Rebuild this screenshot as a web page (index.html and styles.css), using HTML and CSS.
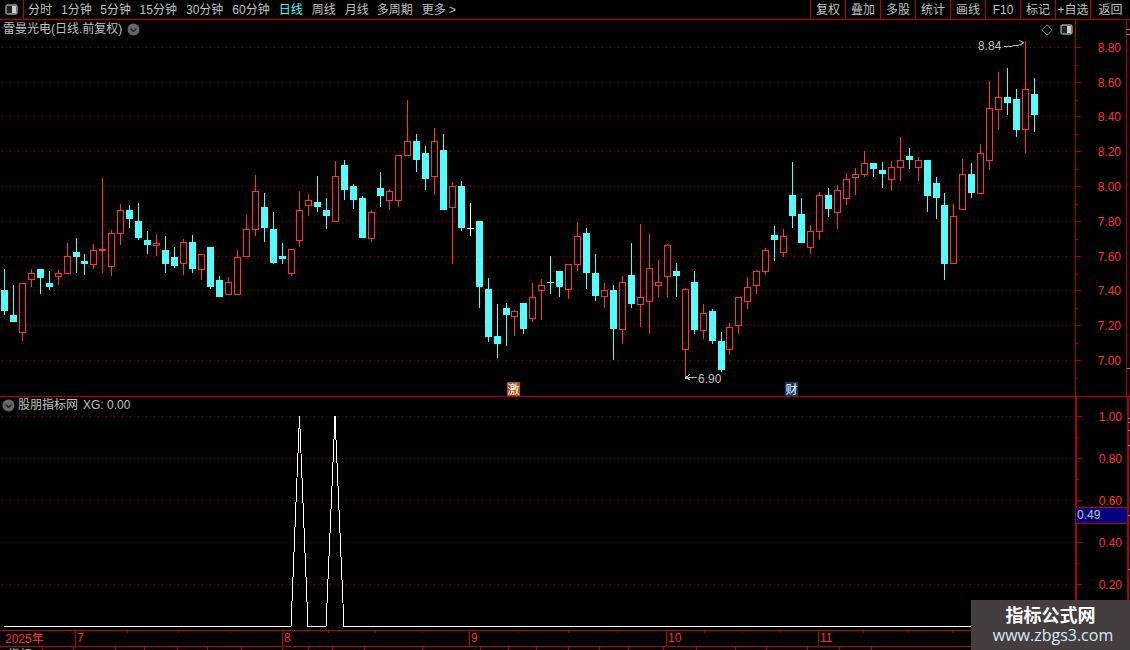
FILE: index.html
```html
<!DOCTYPE html>
<html lang="zh">
<head>
<meta charset="utf-8">
<title>雷曼光电</title>
<link rel="stylesheet" href="styles.css">
</head>
<body>
<div class="app">
  <header class="topbar">
    <div class="toggle-cell">
      <svg class="toggle-icon" width="14" height="12" viewBox="0 0 14 12"><rect x="1" y="1" width="11" height="9" rx="2" fill="#222" stroke="#999" stroke-width="1.4"/><rect x="7" y="2" width="4" height="7" fill="#ccc"/></svg>
    </div>
    <nav class="periods">
      <span>分时</span><span class="tight">1分钟</span><span class="tight">5分钟</span><span>15分钟</span><span>30分钟</span><span>60分钟</span><span class="active">日线</span><span>周线</span><span class="tighter">月线</span><span>多周期</span><span>更多 &gt;</span>
    </nav>
    <nav class="tools">
      <span>复权</span><span>叠加</span><span>多股</span><span>统计</span><span>画线</span><span>F10</span><span>标记</span><span>+自选</span><span>返回</span>
    </nav>
  </header>

  <section class="panel price-panel">
    <div class="plot">
      <div class="plot-title">
        <span>雷曼光电(日线.前复权)</span>
        <svg class="chevron" width="13" height="13" viewBox="0 0 13 13"><circle cx="6.5" cy="6.5" r="6" fill="#666"/><path d="M3.5 5.5 6.5 8.5 9.5 5.5" fill="none" stroke="#222" stroke-width="1.4"/></svg>
      </div>
      <div class="plot-controls">
        <svg width="12" height="12" viewBox="0 0 12 12"><path d="M6 .8 11.2 6 6 11.2 .8 6Z" fill="none" stroke="#888"/></svg>
        <svg width="13" height="12" viewBox="0 0 13 12"><rect x="1" y="1" width="11" height="9" rx="2" fill="#222" stroke="#999" stroke-width="1.4"/><rect x="7" y="2" width="4" height="7" fill="#ccc"/></svg>
      </div>
      <svg id="price-plot" class="canvas" viewBox="0 20 1075 376" width="1075" height="376"></svg>
    </div>
    <div class="axis"><svg id="price-axis" class="canvas" viewBox="1076 20 54 376" width="54" height="376"></svg></div>
  </section>

  <section class="panel xg-panel">
    <div class="plot">
      <div class="plot-title xg-title">
        <svg class="chevron" width="13" height="13" viewBox="0 0 13 13"><circle cx="6.5" cy="6.5" r="6" fill="#666"/><path d="M3.5 5.5 6.5 8.5 9.5 5.5" fill="none" stroke="#222" stroke-width="1.4"/></svg>
        <span>股朋指标网</span><span class="xg-value">XG: 0.00</span>
      </div>
      <svg id="xg-plot" class="canvas" viewBox="0 397 1074 233" width="1074" height="233"></svg>
    </div>
    <div class="axis axis-thick">
      <svg id="xg-axis" class="canvas" viewBox="1076 397 54 233" width="54" height="233"></svg>
      <div class="current-value">0.49</div>
    </div>
  </section>

  <footer class="dates" id="dates">
    <span class="year">2025年</span>
  </footer>
  <div class="tabs" id="tabs"></div>

  <aside class="watermark">
    <strong>指标公式网</strong>
    <span>www.zbgs3.com</span>
  </aside>
</div>
<script src="chart.js"></script>
</body>
</html>
```

FILE: styles.css
```css
* { box-sizing: border-box; }

html, body {
  margin: 0;
  height: 100%;
  background: #000;
  overflow: hidden;
}

.app {
  position: relative;
  width: 1130px;
  height: 650px;
  display: flex;
  flex-direction: column;
  overflow: hidden;
  background: #000;
  color: #c0c0c0;
  font: 12px/14px "Liberation Sans", "Noto Sans CJK SC", sans-serif;
}

.topbar {
  height: 20px;
  flex: none;
  display: flex;
  border-bottom: 1px solid #c00000;
}

.toggle-cell {
  width: 24px;
  display: flex;
  align-items: center;
  justify-content: center;
  border-right: 1px solid #c00000;
}

.periods {
  display: flex;
  align-items: center;
  gap: 9px;
  padding-left: 4px;
  flex: 1;
  white-space: nowrap;
}

.periods .active { color: #54fcfc; }
.periods .tight { margin-right: -.4px; }
.periods .tighter { margin-right: -1px; }

.tools {
  display: grid;
  grid-template-columns: repeat(8, 35px) 40px;
  width: 320px;
}

.tools span {
  display: flex;
  align-items: center;
  justify-content: center;
  border-left: 1px solid #c00000;
  white-space: nowrap;
}

.panel {
  display: flex;
  flex: none;
}

.price-panel {
  height: 377px;
  border-bottom: 1px solid #c00000;
}

.xg-panel { height: 233px; }

.plot {
  position: relative;
  width: 1075px;
  flex: none;
}

.axis {
  position: relative;
  flex: 1;
  border-left: 1px solid #b00000;
}

.axis-thick { border-left-width: 2px; }

.canvas {
  display: block;
  shape-rendering: crispEdges;
}

.canvas text {
  font: 12px "Liberation Sans", "Noto Sans CJK SC", sans-serif;
  shape-rendering: auto;
}

.plot-title {
  position: absolute;
  left: 3px;
  top: 2px;
  display: flex;
  align-items: center;
  gap: 5px;
  white-space: nowrap;
}

.xg-title {
  left: 2px;
  top: 1px;
  gap: 3px;
}

.xg-value { margin-left: 2px; }

.plot-controls {
  position: absolute;
  right: 2px;
  top: 4px;
  display: flex;
  gap: 7px;
}

.current-value {
  position: absolute;
  left: -1px;
  right: 4px;
  top: 110px;
  height: 17px;
  padding-left: 1px;
  line-height: 15px;
  background: #000080;
  border-top: 1px solid #c00000;
  border-bottom: 1px solid #c00000;
}

.dates {
  position: relative;
  height: 17px;
  flex: none;
  border-top: 1px solid #c00000;
  border-bottom: 1px solid #c00000;
  color: #ff3232;
  line-height: 15px;
}

.year {
  position: absolute;
  left: 5px;
  top: 1px;
}

.month {
  position: absolute;
  top: 0;
  height: 100%;
  padding-left: 1px;
  border-left: 1px solid #c00000;
}

.minor {
  position: absolute;
  top: 0;
  width: 1px;
  height: 2px;
  background: #c00000;
}

.tabs {
  position: relative;
  flex: 1;
  overflow: hidden;
}

.tab {
  position: absolute;
  top: 0;
  width: 1px;
  height: 100%;
  background: #c00000;
}

.tab-label {
  position: absolute;
  left: 8px;
  top: 1px;
  white-space: nowrap;
}

.watermark {
  position: absolute;
  right: 0;
  bottom: 0;
  width: 159px;
  height: 50px;
  display: flex;
  flex-direction: column;
  align-items: center;
  background: #443e3e;
  color: #fff;
}

.watermark strong {
  margin-top: 4px;
  font: 700 18px/21px "Noto Sans CJK SC", sans-serif;
}

.watermark span {
  margin-left: 5px;
  font: 16px/20px "Open Sans", sans-serif;
  color: #d6e8ff;
}
```

FILE: chart.js
```js
// x, wick top, wick bottom, body top, body bottom, kind (r red, c cyan, w white)
var candles = [
[4,269,315,290,311,'c'],[13,285,322,315,322,'c'],[22,283,341,283,333,'r'],[31,269,287,273,280,'r'],[40,269,294,269,278,'c'],[49,271,290,283,287,'c'],[58,270,285,273,277,'r'],[67,243,274,256,274,'r'],[76,238,273,252,257,'c'],[84,254,275,261,264,'c'],
[93,244,269,250,265,'r'],[102,178,273,249,251,'r'],[111,230,276,233,267,'r'],[120,204,245,210,234,'r'],[129,205,228,210,219,'c'],[138,203,240,221,238,'c'],[147,231,254,240,245,'c'],[156,234,256,243,246,'r'],[165,236,273,250,264,'c'],[174,247,268,257,266,'c'],
[183,239,275,242,264,'r'],[192,235,273,242,269,'c'],[201,254,280,254,270,'r'],[210,247,289,247,287,'c'],[219,276,297,280,297,'c'],[228,277,295,282,295,'r'],[237,250,295,257,295,'r'],[246,215,257,229,257,'r'],[255,175,236,191,230,'r'],[264,193,242,207,228,'c'],
[273,212,264,229,263,'c'],[282,243,264,256,259,'c'],[291,249,276,249,274,'r'],[299,191,247,210,241,'r'],[308,194,216,200,206,'r'],[317,176,212,202,207,'c'],[326,198,229,210,216,'c'],[335,161,222,176,222,'r'],[344,160,200,165,190,'c'],[353,184,209,186,200,'c'],
[362,196,238,198,238,'c'],[371,210,242,212,239,'r'],[380,172,207,188,196,'c'],[389,189,210,191,201,'r'],[398,155,207,155,201,'r'],[407,100,156,141,156,'r'],[416,134,172,141,160,'c'],[425,146,190,153,179,'c'],[434,128,195,141,177,'r'],[443,134,210,150,210,'c'],
[452,182,264,186,208,'r'],[461,181,231,186,228,'c'],[470,203,236,228,229,'w'],[479,221,308,221,287,'c'],[488,278,342,289,337,'c'],[497,304,358,336,344,'c'],[506,303,346,308,315,'c'],[514,310,336,311,317,'r'],[523,303,334,303,329,'c'],[532,283,322,297,319,'r'],
[541,279,320,285,291,'r'],[550,256,294,282,283,'c'],[559,271,297,271,287,'c'],[568,264,299,264,290,'r'],[577,222,271,236,265,'r'],[586,228,289,233,273,'c'],[595,254,301,273,296,'c'],[604,283,308,290,297,'r'],[613,285,360,290,329,'c'],[622,276,344,282,330,'r'],
[631,243,308,275,304,'c'],[640,224,327,297,305,'r'],[649,234,334,268,302,'r'],[658,260,297,282,286,'r'],[667,244,297,245,277,'r'],[676,263,297,271,276,'c'],[685,288,378,289,350,'r'],[694,271,334,282,330,'c'],[703,304,339,313,331,'r'],[712,309,344,311,341,'c'],
[721,332,372,341,370,'c'],[729,323,355,327,350,'r'],[738,297,334,297,326,'r'],[747,277,309,287,302,'r'],[756,270,294,271,286,'r'],[765,248,275,250,272,'r'],[774,226,261,235,240,'c'],[783,229,257,236,253,'r'],[792,162,228,195,216,'c'],[801,198,243,214,243,'c'],
[810,225,254,231,248,'r'],[819,192,240,195,232,'r'],[828,188,217,195,209,'c'],[837,185,229,190,213,'r'],[846,173,205,179,199,'r'],[855,168,195,174,178,'r'],[864,151,177,163,175,'r'],[873,163,177,163,169,'c'],[882,162,188,170,174,'c'],[891,161,191,167,180,'r'],
[900,137,181,160,168,'r'],[909,148,169,156,160,'c'],[918,157,181,160,168,'r'],[927,160,212,160,196,'c'],[936,177,219,183,198,'c'],[944,193,280,205,264,'c'],[953,204,264,216,264,'r'],[962,159,210,174,210,'r'],[971,163,198,174,193,'c'],[980,144,194,153,194,'r'],
[989,81,170,108,161,'r'],[998,72,130,97,110,'r'],[1007,68,115,97,103,'c'],[1016,89,137,99,130,'c'],[1025,41,153,89,130,'r'],[1034,78,132,94,115,'c']
];

var RED = '#ff3232', CYAN = '#54fcfc', GRID = '#8c0000', LINE = '#b00000', TEXT = '#c0c0c0';

function rect(x, y, w, h, fill) {
  return '<rect x="' + x + '" y="' + y + '" width="' + w + '" height="' + h + '" fill="' + fill + '"/>';
}
function dotted(y, x2) {
  return '<path d="M2 ' + (y + .5) + 'H' + x2 + '" stroke="' + GRID + '" stroke-dasharray="1 3" fill="none"/>';
}
function label(x, y, s, fill, anchor) {
  return '<text x="' + x + '" y="' + y + '" fill="' + fill + '"' + (anchor ? ' text-anchor="' + anchor + '"' : '') + '>' + s + '</text>';
}

function drawCandle(c) {
  var x = c[0], hi = c[1], lo = c[2], top = c[3], bot = c[4], k = c[5];
  var col = k === 'r' ? RED : k === 'c' ? CYAN : '#fff';
  var s = '';
  if (k === 'w' || bot - top < 2 && k === 'c') {
    return rect(x, hi, 1, lo - hi, col) + rect(x - 3, top, 7, 1, col);
  }
  if (top > hi) s += rect(x, hi, 1, top - hi, col);
  if (lo > bot) s += rect(x, bot, 1, lo - bot, col);
  if (k === 'c') return s + rect(x - 3, top, 7, bot - top, col);
  return s + '<rect x="' + (x - 2.5) + '" y="' + (top + .5) + '" width="6" height="' + (bot - top - 1) + '" fill="none" stroke="' + col + '"/>';
}

var priceYs = [47, 82, 116, 151, 186, 221, 256, 290, 325, 360];
var priceLabels = ['8.80', '8.60', '8.40', '8.20', '8.00', '7.80', '7.60', '7.40', '7.20', '7.00'];

var p = '';
priceYs.forEach(function (y) { p += dotted(y, 1075); });
p += candles.map(drawCandle).join('');
// high / low annotations
p += label(978, 50, '8.84', TEXT);
p += '<path d="M1004 46.5H1011L1014 45.5H1018L1024 42.5M1019 40.5 1024 42.5 1020 45" fill="none" stroke="' + TEXT + '" shape-rendering="auto"/>';
p += label(698, 383, '6.90', TEXT);
p += '<path d="M697 377.5H686M690 374.5 686 377.5 690 380" fill="none" stroke="' + TEXT + '"/>';
p += rect(685, 377, 2, 2, TEXT);
p += rect(507, 382, 13, 14, '#b0500f') + label(507.5, 394, '激', '#fff');
p += rect(785, 382, 13, 14, '#0f3a6e') + label(785.5, 394, '财', '#fff');
document.getElementById('price-plot').innerHTML = p;

function axis(ys, labels, step) {
  var a = '';
  ys.forEach(function (y, i) {
    a += rect(1076, y, 5, 1, LINE);
    a += rect(1076, y + Math.round(step / 2), 2, 1, LINE);
    a += label(1121, y + 5, labels[i], RED, 'end');
  });
  a += rect(1126, 0, 1, 650, LINE);
  return a;
}

document.getElementById('price-axis').innerHTML = axis(priceYs, priceLabels, 35)
  + rect(1127, 29, 3, 1, '#888') + rect(1127, 34, 3, 1, '#888') + rect(1127, 368, 3, 1, '#888');

var xgYs = [416, 458, 500, 542, 584];
var xgLabels = ['1.00', '0.80', '0.60', '0.40', '0.20'];
var x = '';
xgYs.forEach(function (y) { x += dotted(y, 1074); });
x += '<path d="M4 626.5H291L299.5 416L308 626.5H326L335 416L344 626.5H1074" fill="none" stroke="#fff"/>';
document.getElementById('xg-plot').innerHTML = x;

document.getElementById('xg-axis').innerHTML = axis(xgYs, xgLabels, 42)
  + rect(1126, 397, 2, 233, LINE)
  + rect(1127, 418, 3, 1, '#888') + rect(1127, 422, 3, 1, '#888') + rect(1127, 430, 3, 1, '#888')
  + rect(1127, 445, 3, 1, '#888') + rect(1127, 515, 3, 1, '#888') + rect(1127, 569, 3, 1, '#888');

var dates = document.getElementById('dates');
[[75, '7'], [282, '8'], [469, '9'], [666, '10'], [818, '11']].forEach(function (m) {
  var el = document.createElement('span');
  el.className = 'month';
  el.style.left = m[0] + 'px';
  el.textContent = m[1];
  dates.appendChild(el);
});
[127, 178, 230, 328, 375, 422, 518, 568, 617, 704, 742, 780, 863, 908, 952].forEach(function (v) {
  var el = document.createElement('i');
  el.className = 'minor';
  el.style.left = v + 'px';
  dates.appendChild(el);
});

var tabs = document.getElementById('tabs');
[42, 73, 115, 144, 177, 207, 241, 282, 308, 332, 364, 422, 480, 508, 536, 568, 599, 628, 663, 696, 735, 766, 807, 839, 871].forEach(function (v) {
  var el = document.createElement('i');
  el.className = 'tab';
  el.style.left = v + 'px';
  tabs.appendChild(el);
});
var tl = document.createElement('span');
tl.className = 'tab-label';
tl.textContent = '指标';
tabs.appendChild(tl);
```
